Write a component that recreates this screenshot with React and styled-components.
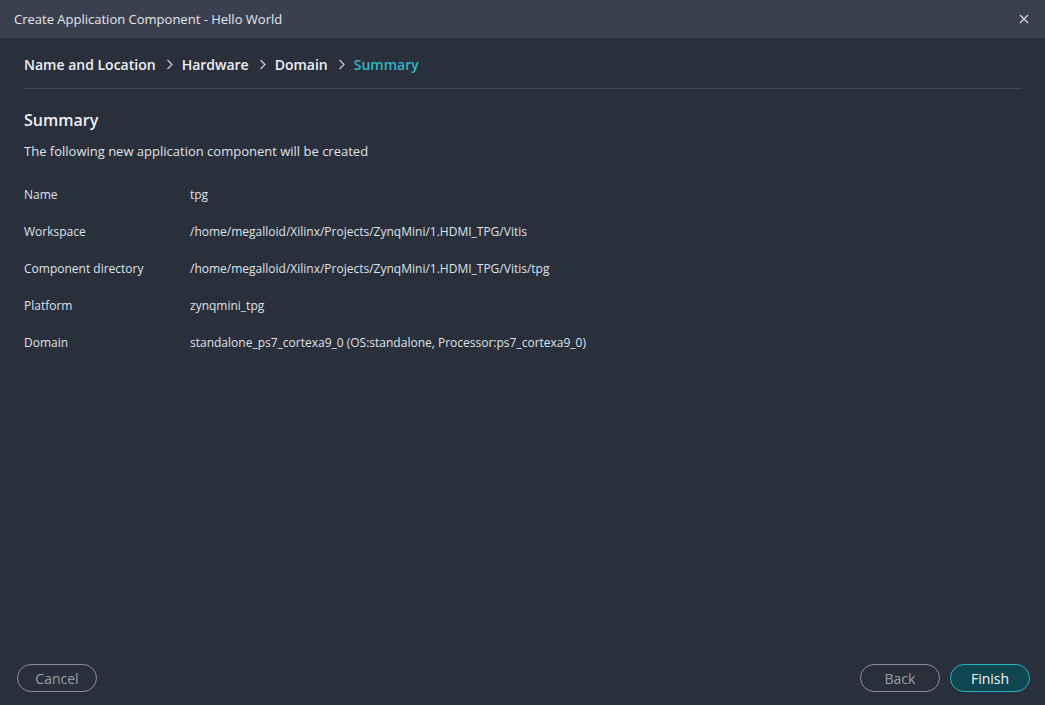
import React from 'react';
import styled, { createGlobalStyle } from 'styled-components';

const GlobalStyle = createGlobalStyle`
  html, body {
    margin: 0;
    padding: 0;
    background: #2a2f3c;
  }
  body {
    font-family: "Open Sans", "Noto Sans", sans-serif;
    color: #e6e8ec;
  }
`;

const Dialog = styled.div`
  width: 1045px;
  height: 705px;
  display: flex;
  flex-direction: column;
  background: #2a2f3c;
`;

const TitleBar = styled.div`
  height: 38px;
  flex-shrink: 0;
  display: flex;
  align-items: center;
  justify-content: space-between;
  padding: 0 14px;
  background: #3a404f;
  font-size: 13px;
  color: #e4e6ea;
`;

const CloseButton = styled.button`
  background: none;
  border: none;
  padding: 0;
  width: 14px;
  height: 14px;
  display: flex;
  align-items: center;
  justify-content: center;
  cursor: pointer;
  color: #d0d3da;
`;

const Body = styled.div`
  flex: 1;
  display: flex;
  flex-direction: column;
  padding: 0 23px 0 24px;
`;

const Crumbs = styled.nav`
  box-sizing: border-box;
  display: flex;
  align-items: center;
  height: 51px;
  padding-top: 2px;
  border-bottom: 1px solid #414756;
`;

const Crumb = styled.span`
  font-size: 14px;
  font-weight: 600;
  color: ${p => (p.$active ? '#2db8c6' : '#eef0f3')};
`;

const Sep = styled.span`
  display: flex;
  align-items: center;
  margin: 0 9px 0 10px;
  color: #c9ccd3;
`;

const Heading = styled.h2`
  margin: 20px 0 0;
  font-size: 16px;
  font-weight: 600;
  line-height: 22px;
  color: #eef0f3;
`;

const Lead = styled.p`
  margin: 11px 0 0;
  font-size: 13px;
  line-height: 18px;
  color: #dfe2e7;
`;

const Grid = styled.div`
  display: grid;
  grid-template-columns: 166px 1fr;
  row-gap: 20px;
  margin-top: 26px;
  font-size: 12px;
  line-height: 17px;
  color: #dfe2e7;
`;

const Footer = styled.div`
  margin-top: auto;
  display: flex;
  align-items: center;
  justify-content: space-between;
  padding: 0 15px 13px 17px;
`;

const Group = styled.div`
  display: flex;
  gap: 10px;
`;

const Button = styled.button`
  width: 80px;
  height: 28px;
  border-radius: 14px;
  font-family: inherit;
  font-size: 14px;
  cursor: pointer;
  border: 1px solid ${p => (p.$primary ? '#24b3bf' : '#8b8f98')};
  background: ${p => (p.$primary ? '#0f4651' : 'transparent')};
  color: ${p => (p.$primary ? '#f2f4f6' : '#9a9ea6')};
  font-weight: ${p => (p.$primary ? 500 : 400)};
`;

const Chevron = () => (
  <svg width="7" height="11" viewBox="0 0 7 11" fill="none">
    <path d="M1.5 1L6 5.5L1.5 10" stroke="currentColor" strokeWidth="1.2" />
  </svg>
);

const rows = [
  ['Name', 'tpg'],
  ['Workspace', '/home/megalloid/Xilinx/Projects/ZynqMini/1.HDMI_TPG/Vitis'],
  ['Component directory', '/home/megalloid/Xilinx/Projects/ZynqMini/1.HDMI_TPG/Vitis/tpg'],
  ['Platform', 'zynqmini_tpg'],
  ['Domain', 'standalone_ps7_cortexa9_0 (OS:standalone, Processor:ps7_cortexa9_0)'],
];

const steps = ['Name and Location', 'Hardware', 'Domain', 'Summary'];

export default function App() {
  return (
    <>
      <GlobalStyle />
      <Dialog>
        <TitleBar>
          <span>Create Application Component - Hello World</span>
          <CloseButton aria-label="Close">
            <svg width="10" height="10" viewBox="0 0 10 10">
              <path d="M1 1L9 9M9 1L1 9" stroke="currentColor" strokeWidth="1.4" />
            </svg>
          </CloseButton>
        </TitleBar>
        <Body>
          <Crumbs>
            {steps.map((s, i) => (
              <React.Fragment key={s}>
                {i > 0 && <Sep><Chevron /></Sep>}
                <Crumb $active={i === steps.length - 1}>{s}</Crumb>
              </React.Fragment>
            ))}
          </Crumbs>
          <Heading>Summary</Heading>
          <Lead>The following new application component will be created</Lead>
          <Grid>
            {rows.map(([k, v]) => (
              <React.Fragment key={k}>
                <span>{k}</span>
                <span>{v}</span>
              </React.Fragment>
            ))}
          </Grid>
        </Body>
        <Footer>
          <Button>Cancel</Button>
          <Group>
            <Button>Back</Button>
            <Button $primary>Finish</Button>
          </Group>
        </Footer>
      </Dialog>
    </>
  );
}
